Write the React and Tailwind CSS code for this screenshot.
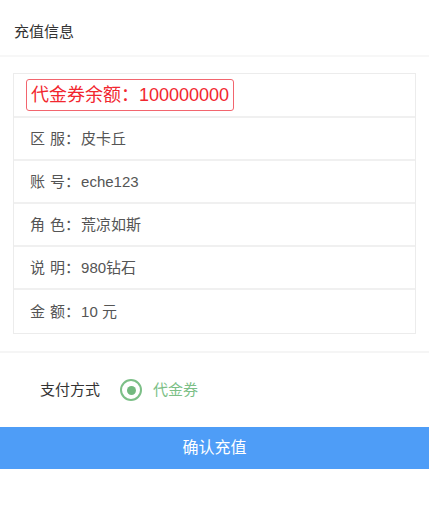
export default function App() {
  const rows = [
    ["区", "服", "皮卡丘"],
    ["账", "号", "eche123"],
    ["角", "色", "荒凉如斯"],
    ["说", "明", "980钻石"],
    ["金", "额", "10 元"],
  ];
  return (
    <div className="w-[429px] h-[511px] bg-white" style={{ fontFamily: '"Liberation Sans", "Noto Sans CJK SC", sans-serif' }}>
      <div className="h-[57px] pt-[10px] flex items-center pl-[14px] text-[15px] text-[#333] border-b-2 border-[#f7f7f7]">
        充值信息
      </div>
      <div className="pt-[16px] px-[13px] pb-[17px] border-b-2 border-[#f5f5f5]">
        <div className="border border-[#ececec]">
          <div className="h-[44px] flex items-center pl-[12px] border-b-2 border-[#f0f0f0]">
            <span className="h-[32px] px-[4px] flex items-center border border-[#f2656e] rounded-[3px] text-[18px] text-[#f2272f]">
              代金券余额：100000000
            </span>
          </div>
          {rows.map(([a, b, v], i) => (
            <div
              key={i}
              className={`h-[43px] pt-[2px] flex items-center pl-[16px] text-[15px] text-[#555] ${i < rows.length - 1 ? "border-b-2 border-[#f0f0f0]" : ""}`}
            >
              <span>{a}</span>
              <span className="ml-[5px]">{b}：</span>
              <span className="ml-[1px]">{v}</span>
            </div>
          ))}
        </div>
      </div>
      <div className="h-[74px] flex items-center pl-[40px]">
        <span className="text-[15px] text-[#333]">支付方式</span>
        <span className="ml-[20px] w-[22px] h-[22px] rounded-full border-2 border-[#7cbf87] flex items-center justify-center">
          <span className="w-[9px] h-[9px] rounded-full bg-[#73b97f]"></span>
        </span>
        <span className="ml-[11px] text-[15px] text-[#7cbf87]">代金券</span>
      </div>
      <button className="w-full h-[42px] bg-[#4e9df7] text-white text-[16px] flex items-center justify-center">
        确认充值
      </button>
    </div>
  );
}
